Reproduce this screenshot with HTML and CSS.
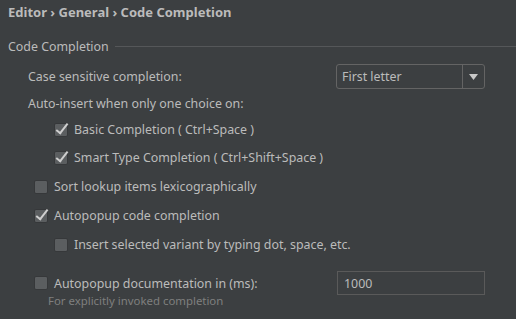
FILE: index.html
```html
<!DOCTYPE html>
<html lang="en">
<head>
    <meta charset="UTF-8">
    <title>Code Completion</title>
    <link rel="stylesheet" href="styles.css">
</head>
<body>

<div class="breadcrumb">Editor &rsaquo; General &rsaquo; Code Completion</div>

<div class="group">
    <div class="group-title">
        <span>Code Completion</span>
        <div class="group-line"></div>
    </div>

    <div class="row indent1 case-row">
        <span class="label">Case sensitive completion:</span>
        <div class="combo">
            <span class="combo-value">First letter</span>
            <span class="combo-arrow"><svg width="9" height="6" viewBox="0 0 9 6"><path d="M0 0H9L4.5 6Z" fill="#c8c8c8"/></svg></span>
        </div>
    </div>

    <div class="row indent1 auto-row">
        <span class="label">Auto-insert when only one choice on:</span>
    </div>

    <div class="row indent2 basic-row">
        <span class="box checked"></span>
        <span class="label">Basic Completion ( Ctrl+Space )</span>
    </div>

    <div class="row indent2">
        <span class="box checked"></span>
        <span class="label">Smart Type Completion ( Ctrl+Shift+Space )</span>
    </div>

    <div class="row indent1b">
        <span class="box"></span>
        <span class="label">Sort lookup items lexicographically</span>
    </div>

    <div class="row indent1b">
        <span class="box checked"></span>
        <span class="label">Autopopup code completion</span>
    </div>

    <div class="row indent2">
        <span class="box"></span>
        <span class="label">Insert selected variant by typing dot, space, etc.</span>
    </div>

    <div class="row indent1b doc-row">
        <span class="box"></span>
        <span class="label">Autopopup documentation in (ms):</span>
        <div class="field">1000</div>
    </div>
    <div class="hint">For explicitly invoked completion</div>
</div>

</body>
</html>
```

FILE: styles.css
```css
body {
    margin: 0;
    background-color: #3c3f41;
    color: #bbbbbb;
    font-family: "Noto Sans", "DejaVu Sans", sans-serif;
    font-size: 12.4px;
    width: 516px;
    height: 319px;
    overflow: hidden;
}
.breadcrumb {
    font-weight: bold;
    font-size: 13px;
    padding: 3px 0 0 8px;
    height: 27px;
    box-sizing: border-box;
}
.group {
    padding: 10px 0 0 8px;
}
.group-title {
    display: flex;
    align-items: center;
    height: 18px;
}
.group-line {
    flex: 1;
    height: 1px;
    background-color: #555759;
    margin-left: 6px;
}
.row {
    display: flex;
    align-items: center;
    height: 29px;
}
.case-row {
    margin-top: 7px;
}
.auto-row {
    height: 25px;
}
.basic-row {
    height: 27px;
}
.indent1 {
    padding-left: 20px;
}
.indent1b {
    padding-left: 26px;
}
.indent2 {
    padding-left: 46px;
}
.box {
    width: 12px;
    height: 12px;
    border: 1px solid #36383a;
    border-radius: 2px;
    background-color: #5b5e60;
    margin-right: 6px;
    position: relative;
    flex-shrink: 0;
}
.box.checked::after {
    content: "";
    position: absolute;
    left: 4px;
    top: -3px;
    width: 4px;
    height: 11px;
    border-right: 2px solid #cfcfcf;
    border-bottom: 2px solid #cfcfcf;
    transform: rotate(38deg);
}
.combo {
    margin-left: auto;
    margin-right: 31px;
    width: 147px;
    height: 23px;
    border: 1px solid #646464;
    border-radius: 3px;
    display: flex;
    align-items: center;
}
.combo-value {
    flex: 1;
    padding-left: 5px;
}
.combo-arrow {
    width: 21px;
    height: 100%;
    border-left: 1px solid #646464;
    display: flex;
    align-items: center;
    justify-content: center;
}
.doc-row {
    margin-top: 10px;
    height: 28px;
}
.field {
    margin-left: auto;
    margin-right: 31px;
    width: 140px;
    height: 22px;
    border: 1px solid #5a5a5a;
    display: flex;
    align-items: center;
    padding-left: 6px;
}
.hint {
    font-size: 11.4px;
    color: #7f7f7f;
    padding-left: 40px;
    margin-top: -4px;
}
```
